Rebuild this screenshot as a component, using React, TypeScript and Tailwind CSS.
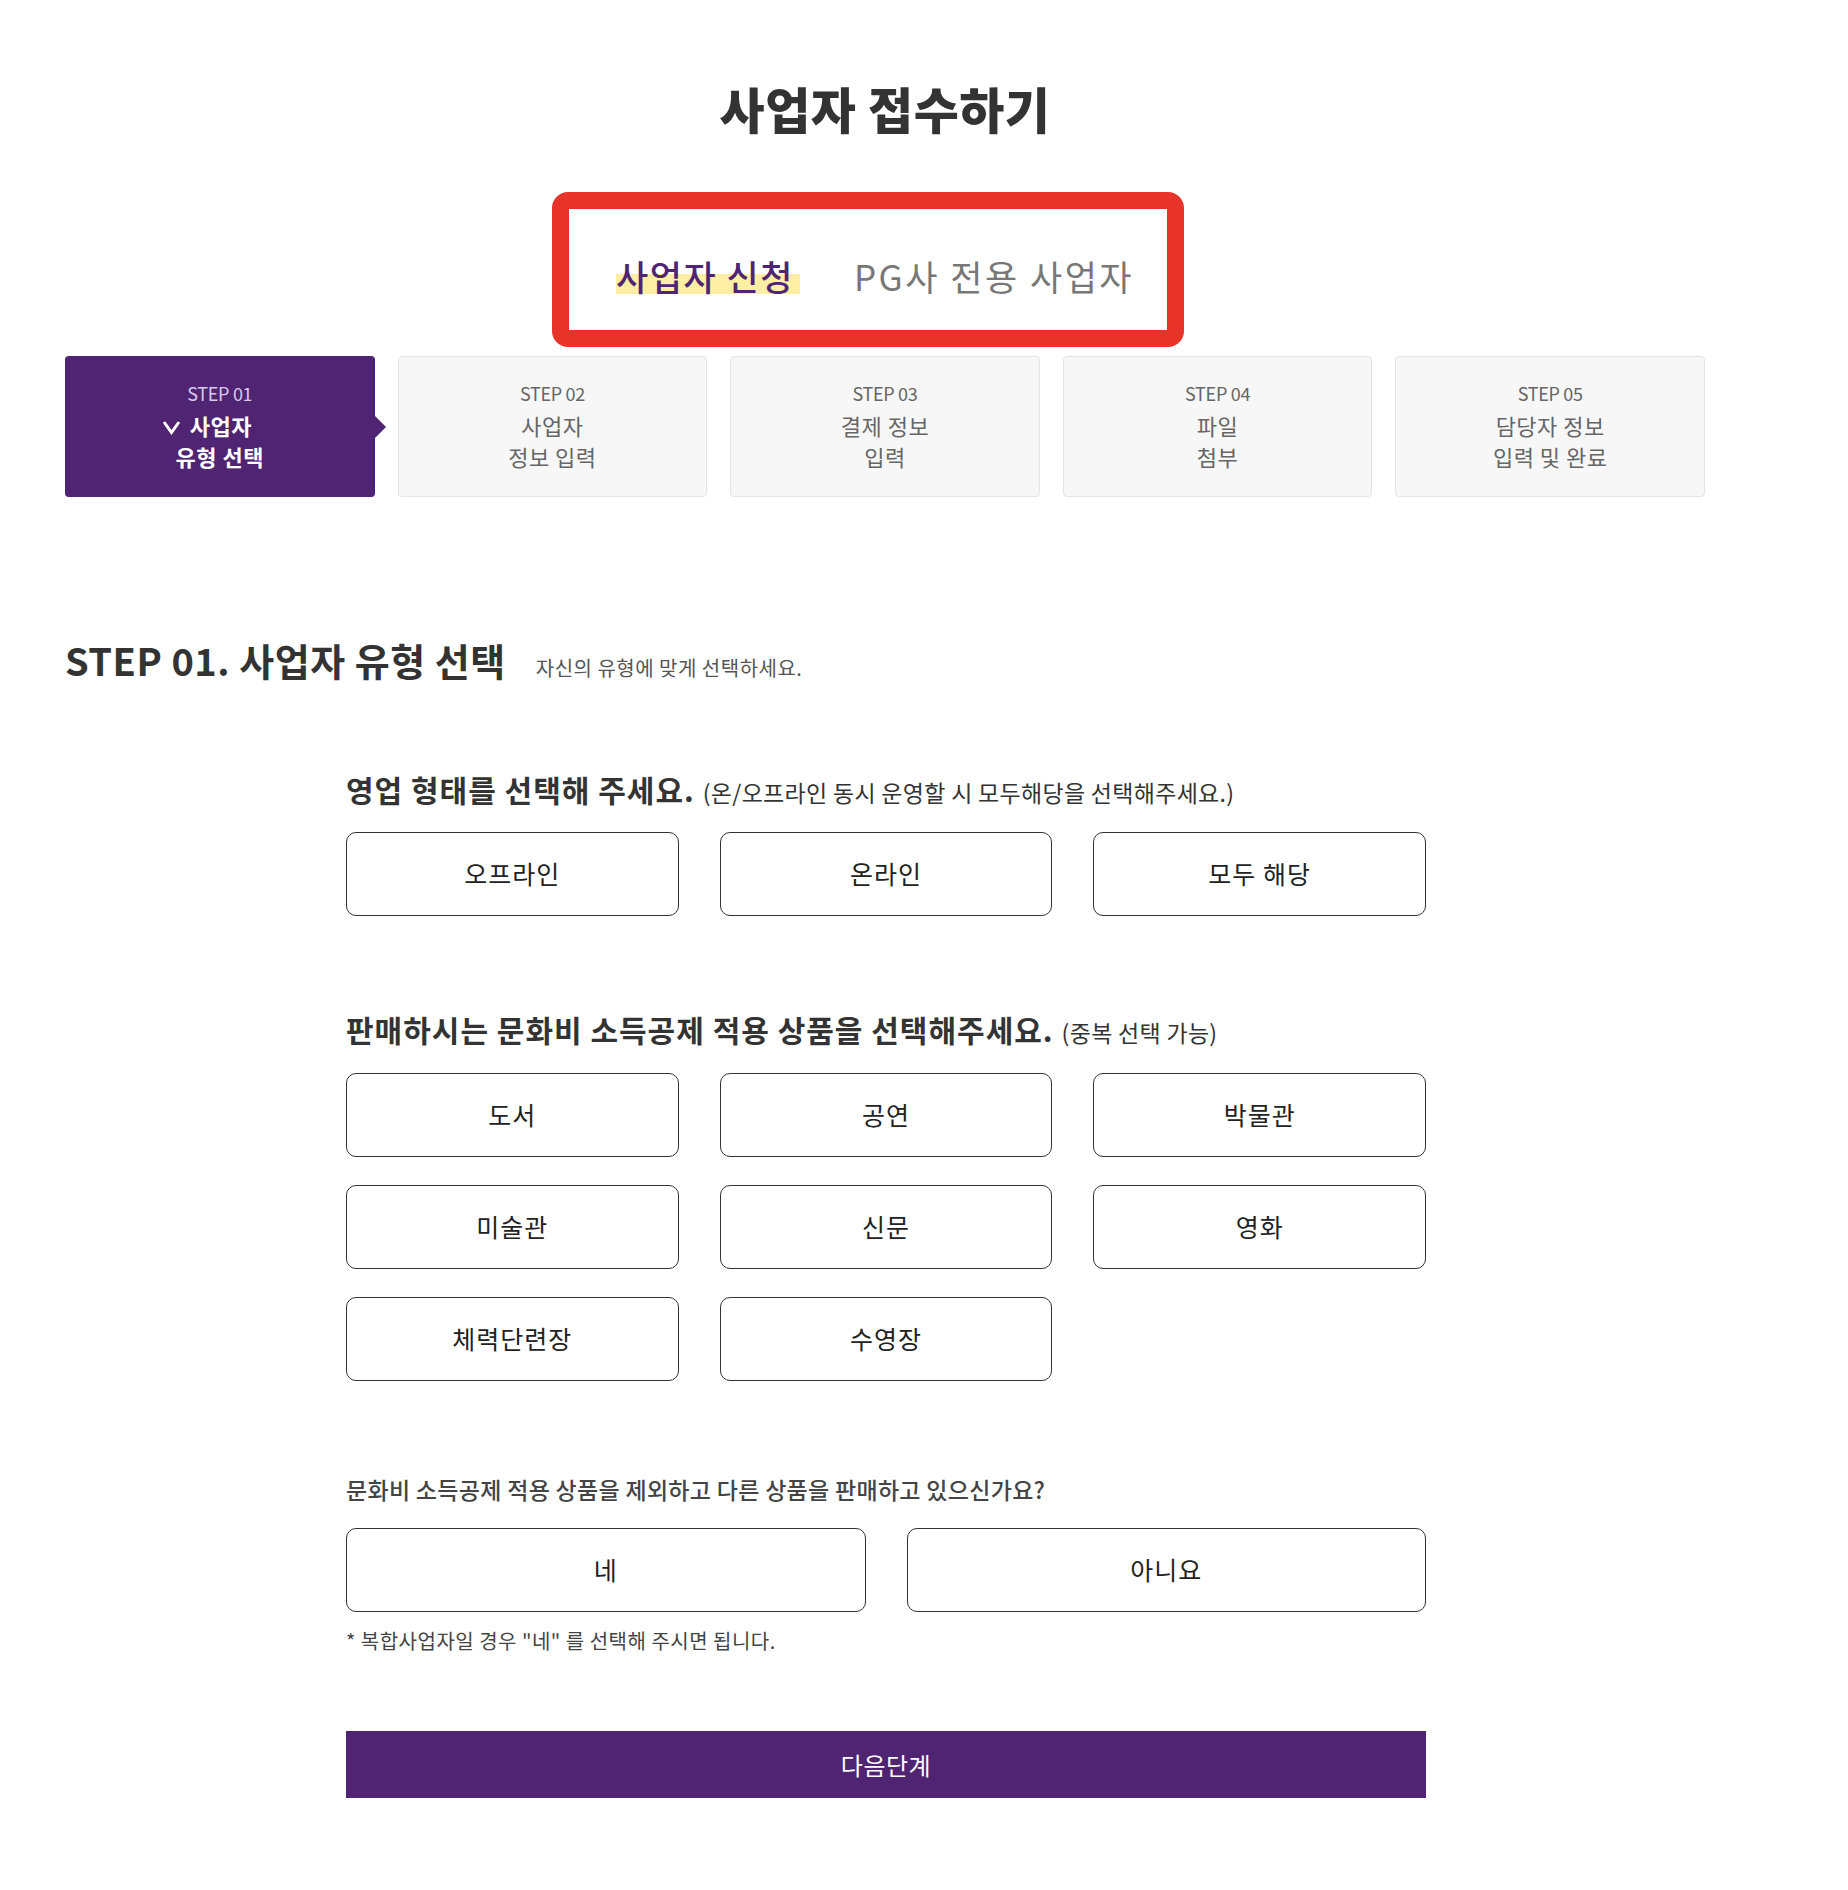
import React from "react";

const FONT = "font-['Noto_Sans_CJK_KR','Noto_Sans_KR','Noto_Sans',sans-serif]";

function Check() {
  return (
    <svg width="19" height="16" viewBox="0 0 19 16" className="inline-block mr-[9px] -mt-[3px]">
      <polyline points="2,3 9.5,13.5 17,3" fill="none" stroke="#ffffff" strokeWidth="3" strokeLinejoin="miter" />
    </svg>
  );
}

const steps = [
  { n: "STEP 02", l1: "사업자", l2: "정보 입력" },
  { n: "STEP 03", l1: "결제 정보", l2: "입력" },
  { n: "STEP 04", l1: "파일", l2: "첨부" },
  { n: "STEP 05", l1: "담당자 정보", l2: "입력 및 완료" },
];

function OptionButton({ label }: { label: string }) {
  return (
    <button className="h-[84px] w-full rounded-[10px] border border-[#333333] bg-white text-[25px] tracking-[1px] text-[#222222] flex items-center justify-center">
      {label}
    </button>
  );
}

export default function App() {
  return (
    <div className={`${FONT} w-full min-h-[1890px] bg-white text-[#333333]`}>
      <div className="ml-[65px] w-[1640px] pt-[81px] pb-[91px]">
        <h1 className="text-center text-[49px] leading-[54px] font-black text-[#333333] tracking-[0.5px]">
          사업자 접수하기
        </h1>

        <div className="mt-[57px] ml-[487px] w-[632px] h-[155px] border-[17px] border-[#e8332a] rounded-[16px] flex items-start pt-[47px] pl-[47px]">
          <span className="text-[35px] leading-[40px] font-medium text-[#4f2472] bg-[linear-gradient(transparent_45%,#fcefa3_45%,#fcefa3_94%,transparent_94%)] pr-[6px] tracking-[1.5px]">
            사업자 신청
          </span>
          <span className="ml-[54px] text-[35px] leading-[40px] text-[#777777] tracking-[2.5px]">
            PG사 전용 사업자
          </span>
        </div>

        <div className="mt-[9px] grid grid-cols-5 gap-[23px]">
          <div className="relative h-[141px] rounded-[4px] bg-[#4f2472] border border-[#4f2472] border-r-[#3b1d8c] flex flex-col items-center justify-center">
            <div className="text-[18px] leading-[22px] text-[#d9c9f0] tracking-[-0.3px]">STEP 01</div>
            <div className="mt-[6px] text-[22px] leading-[31px] font-bold text-white tracking-[0.5px] -ml-[26px]">
              <Check />
              사업자
            </div>
            <div className="text-[22px] leading-[31px] font-bold text-white tracking-[0.5px]">유형 선택</div>
            <div className="absolute right-[-12px] top-1/2 -translate-y-1/2 w-0 h-0 border-y-[12px] border-y-transparent border-l-[12px] border-l-[#4f2472]" />
          </div>
          {steps.map((s) => (
            <div
              key={s.n}
              className="h-[141px] rounded-[4px] bg-[#f7f7f7] border border-[#e3e4e8] flex flex-col items-center justify-center"
            >
              <div className="text-[18px] leading-[22px] text-[#666666] tracking-[-0.3px]">{s.n}</div>
              <div className="mt-[6px] text-[22px] leading-[31px] text-[#666666] tracking-[0.5px]">{s.l1}</div>
              <div className="text-[22px] leading-[31px] text-[#666666] tracking-[0.5px]">{s.l2}</div>
            </div>
          ))}
        </div>

        <div className="mt-[139px] flex items-baseline">
          <h2 className="text-[38px] leading-[48px] font-bold text-[#333333] tracking-[0.5px]">
            STEP 01. 사업자 유형 선택
          </h2>
          <span className="ml-[30px] text-[20px] text-[#555555] tracking-[0.5px]">
            자신의 유형에 맞게 선택하세요.
          </span>
        </div>

        <div className="ml-[281px] w-[1080px]">
          <div className="mt-[85px] flex items-baseline">
            <span className="text-[30px] leading-[40px] font-bold text-[#333333] tracking-[1px]">
              영업 형태를 선택해 주세요.
            </span>
            <span className="ml-[8px] text-[23px] text-[#333333] tracking-[0.3px]">
              (온/오프라인 동시 운영할 시 모두해당을 선택해주세요.)
            </span>
          </div>
          <div className="mt-[22px] grid grid-cols-3 gap-x-[41px]">
            <OptionButton label="오프라인" />
            <OptionButton label="온라인" />
            <OptionButton label="모두 해당" />
          </div>

          <div className="mt-[93px] flex items-baseline">
            <span className="text-[30px] leading-[40px] font-bold text-[#333333] tracking-[1px]">
              판매하시는 문화비 소득공제 적용 상품을 선택해주세요.
            </span>
            <span className="ml-[8px] text-[23px] text-[#333333] tracking-[0.3px]">(중복 선택 가능)</span>
          </div>
          <div className="mt-[24px] grid grid-cols-3 gap-x-[41px] gap-y-[28px]">
            <OptionButton label="도서" />
            <OptionButton label="공연" />
            <OptionButton label="박물관" />
            <OptionButton label="미술관" />
            <OptionButton label="신문" />
            <OptionButton label="영화" />
            <OptionButton label="체력단련장" />
            <OptionButton label="수영장" />
          </div>

          <div className="mt-[92px] text-[23px] leading-[32px] font-medium text-[#444444] tracking-[0.3px]">
            문화비 소득공제 적용 상품을 제외하고 다른 상품을 판매하고 있으신가요?
          </div>
          <div className="mt-[23px] grid grid-cols-2 gap-x-[41px]">
            <OptionButton label="네" />
            <OptionButton label="아니요" />
          </div>
          <div className="mt-[15px] text-[20px] leading-[28px] text-[#444444] tracking-[0.5px]">
            * 복합사업자일 경우 "네" 를 선택해 주시면 됩니다.
          </div>

          <button className="mt-[76px] w-full h-[67px] bg-[#4f2472] text-white text-[24px] tracking-[0.5px] flex items-center justify-center">
            다음단계
          </button>
        </div>
      </div>
    </div>
  );
}
